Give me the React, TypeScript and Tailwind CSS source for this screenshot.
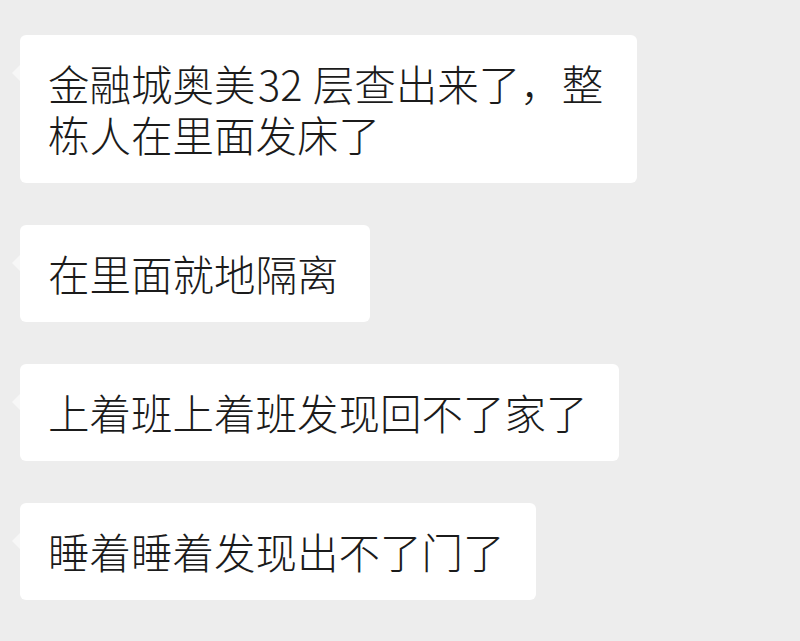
import React from "react";

function Bubble({ children, className = "" }: { children: React.ReactNode; className?: string }) {
  return (
    <div className="relative self-start">
      <span className="absolute left-[-8px] top-[30px] h-0 w-0 border-y-[8px] border-r-[8px] border-y-transparent border-r-[#f7f7f7]" />
      <div
        className={`rounded-[6px] bg-white pl-7 pr-[31px] py-[23px] text-[41.5px] font-light leading-[51px] text-[#1b1b1b] ${className}`}
      >
        {children}
      </div>
    </div>
  );
}

export default function App() {
  return (
    <div
      className="flex h-[641px] w-[800px] flex-col gap-[42px] overflow-hidden bg-[#ededed] pl-5 pt-[35px]"
      style={{ fontFamily: '"Noto Sans CJK SC", "Noto Sans", sans-serif' }}
    >
      <Bubble className="w-[617px]">{"金融城奥美\u200A32\u2005层查出来了，整栋人在里面发床了"}</Bubble>
      <Bubble>在里面就地隔离</Bubble>
      <Bubble>上着班上着班发现回不了家了</Bubble>
      <Bubble>睡着睡着发现出不了门了</Bubble>
    </div>
  );
}
